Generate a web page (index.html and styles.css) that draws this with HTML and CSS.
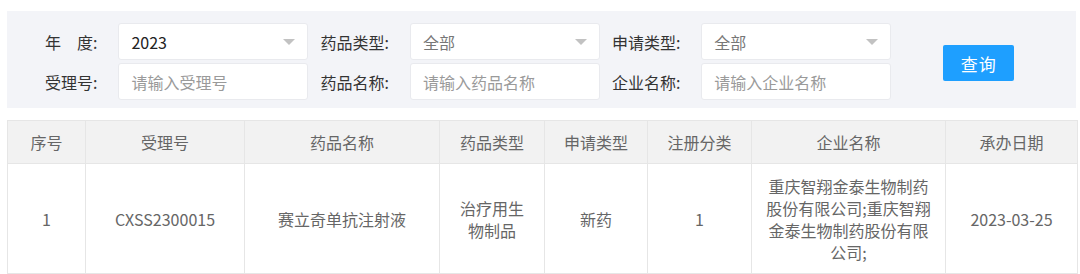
FILE: index.html
```html
<!DOCTYPE html>
<html lang="zh-CN">
<head>
<meta charset="utf-8">
<link rel="stylesheet" href="styles.css">
</head>
<body>
<div class="page">
  <form class="filter">
    <label class="f-label">年　度:</label>
    <div class="f-select"><span class="val">2023</span><i class="arrow"></i></div>
    <label class="f-label">药品类型:</label>
    <div class="f-select"><span class="val muted">全部</span><i class="arrow"></i></div>
    <label class="f-label">申请类型:</label>
    <div class="f-select"><span class="val muted">全部</span><i class="arrow"></i></div>
    <div class="btn-cell"><button type="button" class="btn">查询</button></div>

    <label class="f-label">受理号:</label>
    <div class="f-input"><span class="ph">请输入受理号</span></div>
    <label class="f-label">药品名称:</label>
    <div class="f-input"><span class="ph">请输入药品名称</span></div>
    <label class="f-label">企业名称:</label>
    <div class="f-input"><span class="ph">请输入企业名称</span></div>
  </form>

  <table class="grid">
    <colgroup>
      <col class="c1"><col class="c2"><col class="c3"><col class="c4"><col class="c5"><col class="c6"><col class="c7"><col class="c8">
    </colgroup>
    <thead>
      <tr>
        <th>序号</th><th>受理号</th><th>药品名称</th><th>药品类型</th><th>申请类型</th><th>注册分类</th><th>企业名称</th><th>承办日期</th>
      </tr>
    </thead>
    <tbody>
      <tr>
        <td>1</td>
        <td>CXSS2300015</td>
        <td>赛立奇单抗注射液</td>
        <td>治疗用生物制品</td>
        <td>新药</td>
        <td>1</td>
        <td class="company">重庆智翔金泰生物制药股份有限公司;重庆智翔金泰生物制药股份有限公司;</td>
        <td>2023-03-25</td>
      </tr>
    </tbody>
  </table>
</div>
</body>
</html>
```

FILE: styles.css
```css
* { box-sizing: border-box; }
html, body { margin: 0; padding: 0; background: #fff; }
body {
  font-family: "Noto Sans CJK SC", "Noto Sans", sans-serif;
  font-size: 16px;
  color: #333;
}
.page {
  width: 1080px;
  height: 274px;
  padding: 11px 4px 0 7px;
  overflow: hidden;
}
.filter {
  display: grid;
  grid-template-columns: auto 202px auto 202px auto 202px auto;
  grid-template-rows: 37px 37px;
  justify-content: start;
  row-gap: 3px;
  align-items: center;
  background: #f3f4f8;
  height: 97px;
  padding: 12px 0 8px 38px;
  margin: 0;
}
.f-label {
  padding-right: 21px;
  line-height: 22px;
  color: #333;
  white-space: nowrap;
}
.f-select, .f-input {
  height: 37px;
  background: #fff;
  border: 1px solid #e9eaee;
  border-radius: 3px;
  margin-right: 12px;
  display: flex;
  align-items: center;
  padding: 0 12px;
  position: relative;
}
.val { color: #222; }
.val.muted { color: #777; }
.ph { color: #9a9a9a; }
.arrow {
  position: absolute;
  right: 12px;
  top: 15px;
  width: 0; height: 0;
  border-left: 6px solid transparent;
  border-right: 6px solid transparent;
  border-top: 6px solid #c2c2c2;
}
.btn-cell {
  grid-column: 7;
  grid-row: 1 / span 2;
  align-self: center;
  padding-left: 40px;
  padding-top: 3px;
}
.btn {
  display: block;
  width: 71px;
  height: 36px;
  border: none;
  border-radius: 2px;
  background: #1e9fff;
  color: #fff;
  font-family: inherit;
  font-size: 17px;
  padding: 0;
  letter-spacing: 1px;
}
.grid {
  margin-top: 12px;
  width: 1070px;
  table-layout: fixed;
  border-collapse: collapse;
  color: #666;
}
.c1 { width: 78px; } .c2 { width: 159px; } .c3 { width: 195px; } .c4 { width: 105px; }
.c5 { width: 103px; } .c6 { width: 104px; } .c7 { width: 194px; } .c8 { width: 132px; }
.grid th, .grid td {
  border: 1px solid #e6e6e6;
  text-align: center;
  vertical-align: middle;
  padding: 0 15px;
  line-height: 22px;
  font-weight: normal;
}
.grid th {
  background: #f2f2f2;
  height: 43px;
}
.grid td {
  height: 110px;
}
.grid td.company { padding: 0 12px; }
```
